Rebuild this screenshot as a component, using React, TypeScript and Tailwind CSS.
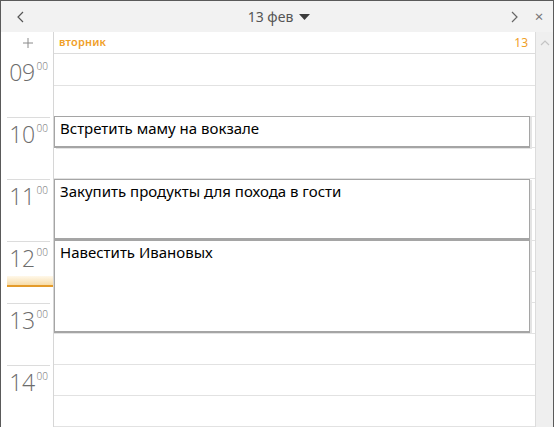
// Day view of a calendar: header bar, hour gutter, day column with events.

const HOURS = ['09', '10', '11', '12', '13', '14'];

interface CalEvent {
  title: string;
  top: number;
  height: number;
}

// tops are px from the 09:00 line, 62px per hour
const EVENTS: CalEvent[] = [
  { title: 'Встретить маму на вокзале', top: 62, height: 32 },
  { title: 'Закупить продукты для похода в гости', top: 125, height: 61 },
  { title: 'Навестить Ивановых', top: 186, height: 93 },
];

const FONT = { fontFamily: '"Noto Sans", "Open Sans", sans-serif' };

function Chevron({ dir }: { dir: 'left' | 'right' | 'up' }) {
  const d =
    dir === 'left' ? 'M6 1 L1 6 L6 11' : dir === 'right' ? 'M1 1 L6 6 L1 11' : 'M1 6 L5 2 L9 6';
  return (
    <svg width={dir === 'up' ? 10 : 7} height={dir === 'up' ? 8 : 12} viewBox={dir === 'up' ? '0 0 10 8' : '0 0 7 12'}>
      <path d={d} fill="none" stroke="currentColor" strokeWidth="1.2" />
    </svg>
  );
}

function Header() {
  return (
    <div className="h-[31px] bg-[#f2f2f2] flex items-center text-[#555] shrink-0">
      <div className="w-[38px] flex justify-center">
        <Chevron dir="left" />
      </div>
      <div className="flex-1 flex items-center justify-center gap-[6px] pl-[16px]">
        <span className="text-[14px]">13 фев</span>
        <svg width="11" height="6" viewBox="0 0 11 6">
          <path d="M0 0 H11 L5.5 6 Z" fill="#3c3c3c" />
        </svg>
      </div>
      <div className="w-[22px] flex justify-center text-[#666]">
        <Chevron dir="right" />
      </div>
      <div className="w-[28px] flex justify-center text-[#777] text-[15px] leading-none pb-[1px]">×</div>
    </div>
  );
}

function HourLabel({ h }: { h: string }) {
  return (
    <div
      className="flex items-start justify-end pr-[5px] pt-[4px] text-[#6c6c6c] font-light"
      style={{ fontFamily: '"Open Sans", "Noto Sans", sans-serif' }}
    >
      <span className="text-[23px] leading-[27px] tracking-[-0.5px]">{h}</span>
      <span className="text-[10px] leading-[12px] ml-[2px] mt-[1px]">00</span>
    </div>
  );
}

function Gutter() {
  return (
    <div className="w-[53px] shrink-0 border-r border-[#d6d6d6] relative">
      <div className="h-[1px]" />
      {HOURS.map((h, i) => (
        <div key={h} className="h-[62px] relative">
          {i > 0 && <div className="absolute left-[6px] right-[3px] top-0 h-px bg-[#dcdcdc]" />}
          <HourLabel h={h} />
        </div>
      ))}
      {/* current time marker */}
      <div className="absolute left-[6px] right-0 top-[222px] h-[10px] bg-gradient-to-b from-[#fff8ea] to-[#f6d9a0]" />
      <div className="absolute left-[6px] right-0 top-[231px] h-[2px] bg-[#e49b2a]" />
    </div>
  );
}

function DayColumn() {
  return (
    <div className="flex-1 relative border-r border-[#dcdcdc]">
      <div className="h-[1px]" />
      {HOURS.map((h) => (
        <div key={h} className="h-[62px] flex flex-col">
          <div className="h-[31px] border-b border-[#e2e2e2]" />
          <div className="h-[31px] border-b border-[#e2e2e2]" />
        </div>
      ))}
      {EVENTS.map((e) => (
        <div
          key={e.title}
          className="absolute left-0 right-[5px] bg-white border border-[#a5a5a5] border-b-2 shadow-[2px_1px_0_#e4e4e4] px-[5px] pt-[1px] text-[15px] leading-[20px] text-black"
          style={{ top: e.top, height: e.height }}
        >
          {e.title}
        </div>
      ))}
    </div>
  );
}

export default function App() {
  return (
    <div
      className="w-[554px] h-[427px] overflow-hidden bg-white border-t border-l border-r border-[#5a5a5a] flex flex-col"
      style={FONT}
    >
      <Header />
      <div className="flex-1 flex min-h-0">
        <div className="flex-1 flex flex-col min-w-0">
          {/* day title row */}
          <div className="h-[22px] flex shrink-0">
            <div className="w-[53px] border-r border-[#d6d6d6] flex justify-center items-center pl-[2px]">
              <svg width="10" height="10" viewBox="0 0 10 10">
                <path d="M5 0 V10 M0 5 H10" stroke="#8a8a8a" strokeWidth="1" />
              </svg>
            </div>
            <div className="flex-1 border-b border-[#dcdcdc] border-r flex items-center justify-between pl-[5px] pr-[7px] text-[#f0a028]">
              <span className="text-[11px] font-semibold tracking-[0.2px]">вторник</span>
              <span className="text-[12px]">13</span>
            </div>
          </div>
          <div className="flex flex-1 min-h-0">
            <Gutter />
            <DayColumn />
          </div>
        </div>
        <div className="w-[17px] bg-[#efefef] flex justify-center pt-[7px] text-[#c4c4c4]">
          <Chevron dir="up" />
        </div>
      </div>
    </div>
  );
}
